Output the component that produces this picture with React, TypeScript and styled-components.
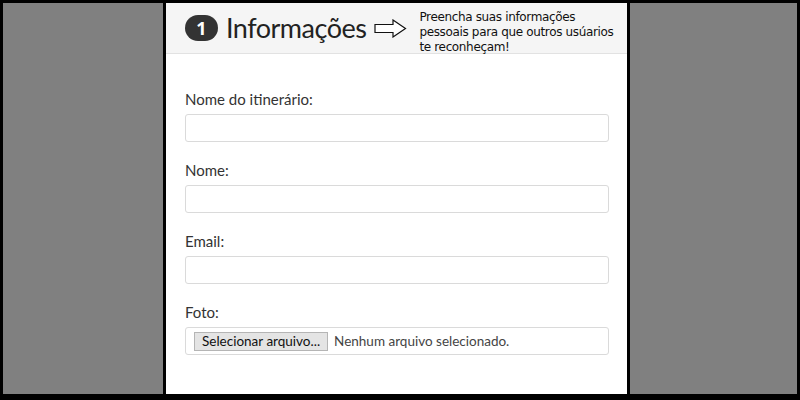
import React from "react";
import styled, { createGlobalStyle } from "styled-components";

const Global = createGlobalStyle`
  html, body { margin: 0; padding: 0; background: #000; }
  * { box-sizing: border-box; }
`;

const Frame = styled.div`
  width: 800px;
  height: 400px;
  background: #000;
  padding: 3px 3px 6px 3px;
  display: grid;
  grid-template-columns: 160px 461px 167px;
  column-gap: 3px;
  overflow: hidden;
`;

const Side = styled.div`
  background: #808080;
`;

const Panel = styled.div`
  background: #fff;
  display: flex;
  flex-direction: column;
  font-family: Lato, "Noto Sans", sans-serif;
  color: #333;
`;

const Header = styled.div`
  height: 51px;
  background: #f5f5f5;
  border-bottom: 1px solid #e2e2e2;
  display: flex;
  align-items: center;
  padding-left: 19px;
`;

const Badge = styled.div`
  width: 33px;
  height: 26px;
  border-radius: 13px;
  background: #333;
  color: #fff;
  font-family: "Noto Sans", sans-serif;
  font-weight: 700;
  font-size: 18px;
  display: flex;
  align-items: center;
  justify-content: center;
  margin-right: 8px;
`;

const Title = styled.div`
  font-size: 27px;
  letter-spacing: -0.5px;
  color: #222;
  line-height: 1;
  padding-bottom: 2px;
`;

const Arrow = styled.svg`
  margin-left: 8px;
  margin-right: 12px;
  flex: none;
`;

const Hint = styled.div`
  font-family: "DejaVu Sans", sans-serif;
  font-size: 12px;
  line-height: 15px;
  color: #111;
  align-self: flex-start;
  margin-top: 7px;
  letter-spacing: -0.35px;
`;

const Body = styled.div`
  padding: 35px 18px 0 19px;
  display: flex;
  flex-direction: column;
  gap: 18px;
`;

const Group = styled.div`
  display: flex;
  flex-direction: column;
  gap: 5px;
`;

const Label = styled.label`
  font-size: 15px;
  line-height: 20px;
  color: #333;
`;

const Input = styled.div`
  height: 28px;
  border: 1px solid #dadada;
  border-radius: 3px;
  background: #fff;
  display: flex;
  align-items: center;
  padding-left: 8px;
`;

const FileButton = styled.div`
  height: 19px;
  padding: 0 7px;
  background: #e4e4e4;
  border: 1px solid #b5b5b5;
  font-size: 13.5px;
  color: #111;
  display: flex;
  align-items: center;
  margin-right: 6px;
`;

const FileText = styled.span`
  font-size: 13.5px;
  color: #444;
`;

export default function App() {
  return (
    <>
      <Global />
      <Frame>
        <Side />
        <Panel>
          <Header>
            <Badge>1</Badge>
            <Title>Informações</Title>
            <Arrow width="33" height="19" viewBox="0 0 33 19">
              <path
                d="M1 5.5 H19 V1 L31.5 9.5 L19 18 V13.5 H1 Z"
                fill="#fff"
                stroke="#111"
                strokeWidth="1.2"
              />
            </Arrow>
            <Hint>
              Preencha suas informações
              <br />
              pessoais para que outros usúarios
              <br />
              te reconheçam!
            </Hint>
          </Header>
          <Body>
            <Group>
              <Label>Nome do itinerário:</Label>
              <Input />
            </Group>
            <Group>
              <Label>Nome:</Label>
              <Input />
            </Group>
            <Group>
              <Label>Email:</Label>
              <Input />
            </Group>
            <Group>
              <Label>Foto:</Label>
              <Input>
                <FileButton>Selecionar arquivo...</FileButton>
                <FileText>Nenhum arquivo selecionado.</FileText>
              </Input>
            </Group>
          </Body>
        </Panel>
        <Side />
      </Frame>
    </>
  );
}
